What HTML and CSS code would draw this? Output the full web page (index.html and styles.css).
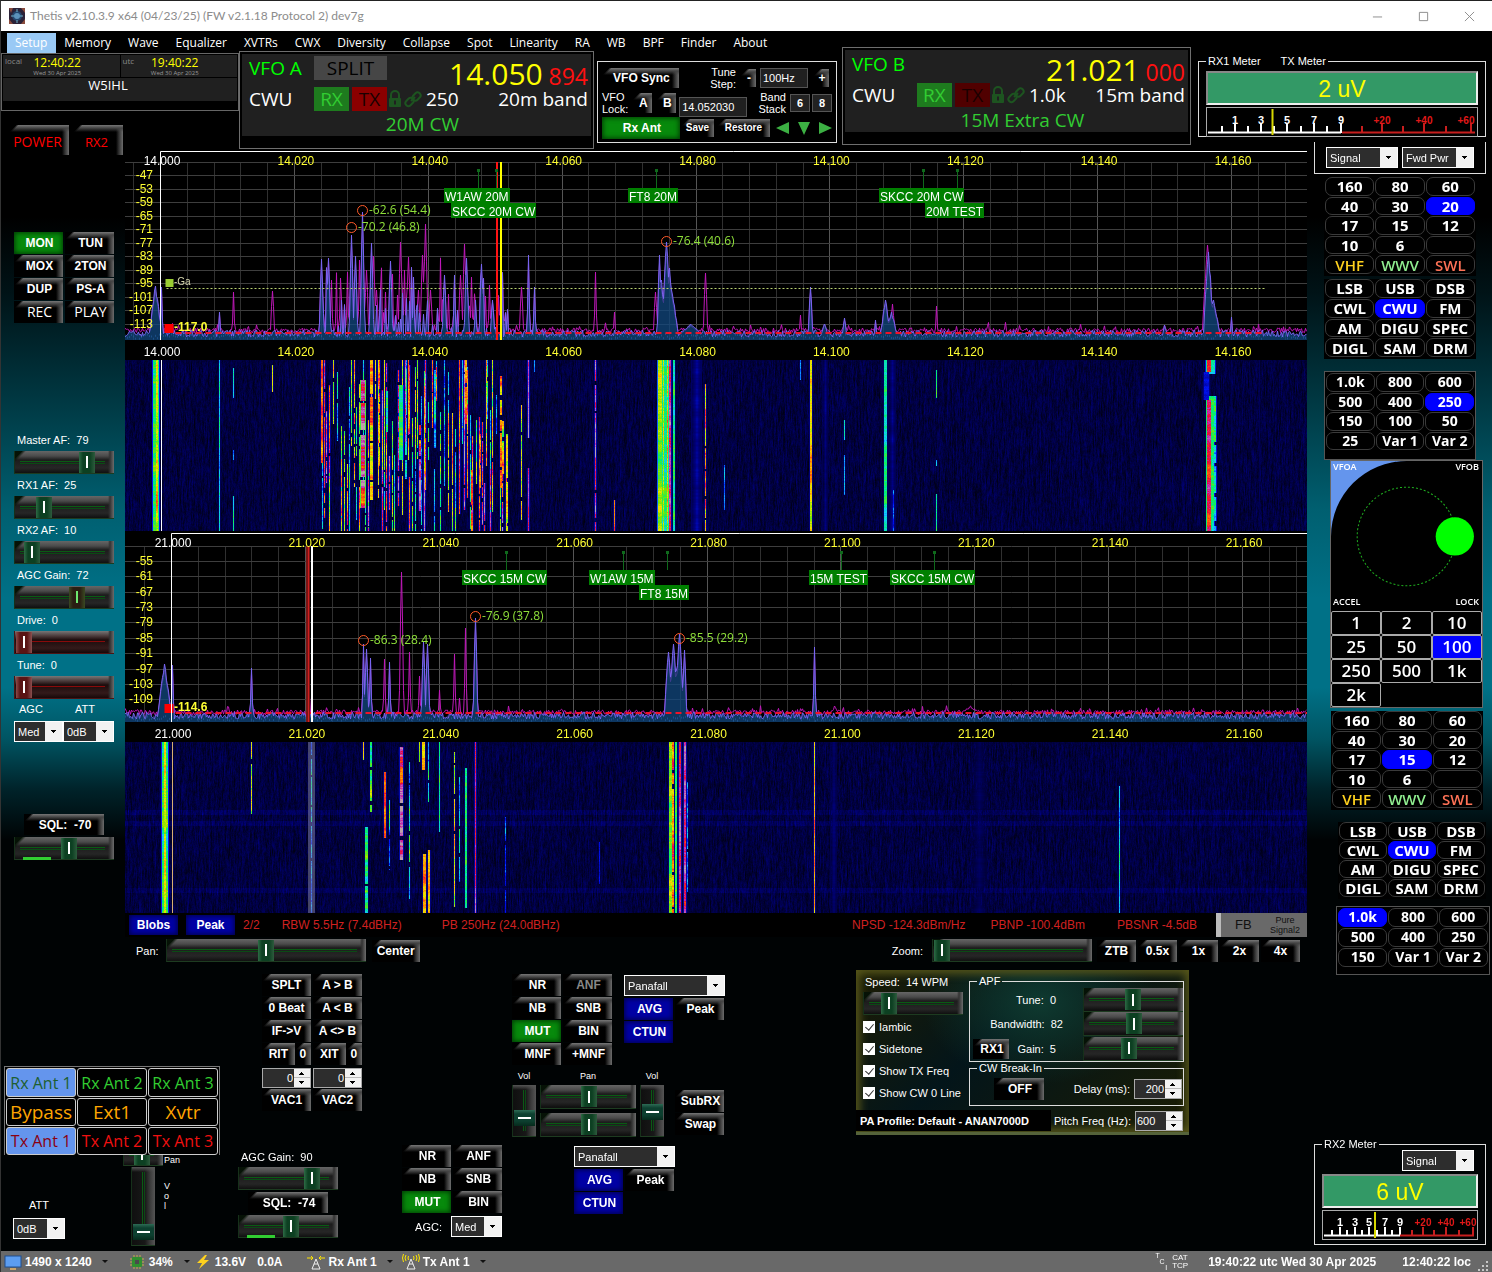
FILE: index.html
```html
<!DOCTYPE html>
<html lang="en">
<head>
<meta charset="UTF-8">
<title>Thetis</title>
<meta content="width=device-width,initial-scale=1.0" name="viewport">
<link rel="stylesheet" href="styles.css">
<script src="display.js" defer></script>
</head>
<body>
<svg width="0" height="0" class="defs">
    <symbol id="lock" viewBox="0 0 14 18">
        <path d="M3 8V5a4 4 0 0 1 8 0v3" fill="none" stroke="currentColor" stroke-width="2"/>
        <rect x="1" y="8" width="12" height="9" rx="1" fill="currentColor"/>
        <path d="M7 10.500v4" stroke="#202020" stroke-width="2"/>
    </symbol>
    <symbol id="chain" viewBox="0 0 18 18">
        <g fill="none" stroke="currentColor" stroke-width="2">
            <rect x="8" y="3.500" width="9" height="6" rx="3" transform="rotate(-45 12.500 6.500)"/>
            <rect x="1" y="9" width="9" height="6" rx="3" transform="rotate(-45 5.500 12)"/>
            <path d="M7 11l4-4"/>
        </g>
    </symbol>
</svg>
<div class="window">
    <header class="titlebar">
        <svg class="app-icon" viewBox="0 0 16 16">
            <rect width="16" height="16" fill="#2b2238"/>
            <path d="M0 0h4l-2 5zM12 0h4v5zM0 11l4 5H0zM16 11v5h-4z" fill="#8a4b3c"/>
            <circle cx="8" cy="8" r="5" fill="#24466c"/>
            <circle cx="8" cy="8" r="3" fill="#5c93bb"/>
            <path d="M8 1v3M8 12v3M2 8h3M11 8h3" stroke="#6fb0c8"/>
        </svg>
        <span class="caption">Thetis v2.10.3.9 x64 (04/23/25) (FW v2.1.18 Protocol 2) dev7g</span>
        <button class="win" aria-label="Minimize"><svg viewBox="0 0 12 12"><path d="M1 6.500h10"/></svg></button>
        <button class="win" aria-label="Maximize"><svg viewBox="0 0 12 12"><path d="M1.500 1.500h9v9h-9z"/></svg></button>
        <button class="win" aria-label="Close"><svg viewBox="0 0 12 12"><path d="M1 1l10 10M11 1L1 11"/></svg></button>
    </header>
    <nav class="menu">
        <a href="#" class="on">Setup</a><a href="#">Memory</a><a href="#">Wave</a><a href="#">Equalizer</a><a href="#">XVTRs</a><a href="#">CWX</a><a href="#">Diversity</a><a href="#">Collapse</a><a href="#">Spot</a><a href="#">Linearity</a><a href="#">RA</a><a href="#">WB</a><a href="#">BPF</a><a href="#">Finder</a><a href="#">About</a>
    </nav>

    <section class="top">
        <div class="clocks">
            <div class="clock"><small>local</small><b>12:40:22</b><i>Wed 30 Apr 2025</i></div>
            <div class="clock"><small>utc</small><b>19:40:22</b><i>Wed 30 Apr 2025</i></div>
            <div class="call">W5IHL</div>
        </div>

        <div class="vfo vfo-a">
            <div class="vfo-in">
                <div class="vrow r1"><span class="vname">VFO A</span><button class="split">SPLIT</button><span class="freq">14.050 <em>894</em></span></div>
                <div class="vrow"><span class="vmode">CWU</span><button class="rx">RX</button><button class="tx">TX</button><svg class="lock"><use href="#lock"/></svg><svg class="chain"><use href="#chain"/></svg><span>250</span><span class="band">20m band</span></div>
                <div class="vseg">20M CW</div>
            </div>
        </div>

        <div class="sync">
            <div class="srow">
                <button class="btn b-sync">VFO Sync</button>
                <label class="two step" for="step">Tune<br>Step:</label>
                <button class="btn b-tiny">-</button>
                <input id="step" class="txt t-step" value="100Hz">
                <button class="btn b-tiny">+</button>
            </div>
            <div class="srow">
                <span class="two">VFO<br>Lock:</span>
                <button class="btn b-ab">A</button>
                <button class="btn b-ab">B</button>
                <input class="txt t-mem" value="14.052030" aria-label="Saved frequency">
                <span class="two stack">Band<br>Stack</span>
                <button class="key">6</button>
                <button class="key">8</button>
            </div>
            <div class="srow last">
                <button class="btn green b-rxant">Rx Ant</button>
                <button class="btn b-save">Save</button>
                <button class="btn b-rest">Restore</button>
                <svg class="arrows" viewBox="0 0 56 14"><path d="M13 1v12L0 7zM22 1h12l-6 13zM43 1v12l13-6z" fill="#3cb043"/></svg>
            </div>
        </div>

        <div class="vfo vfo-b">
            <div class="vfo-in">
                <div class="vrow r1"><span class="vname">VFO B</span><span class="freq">21.021 <em>000</em></span></div>
                <div class="vrow"><span class="vmode">CWU</span><button class="rx">RX</button><button class="tx">TX</button><svg class="lock"><use href="#lock"/></svg><svg class="chain"><use href="#chain"/></svg><span>1.0k</span><span class="band">15m band</span></div>
                <div class="vseg">15M Extra CW</div>
            </div>
        </div>

        <fieldset class="meter">
            <legend><span>RX1 Meter</span><span class="leg2">TX Meter</span></legend>
            <output class="uv">2 uV</output>
            <svg class="scale" viewBox="0 0 272 30">
                <path d="M2 25.500h133M16 25v-6M29 25v-9M42 25v-6M55 25v-9M68 25v-6M81 25v-9M95 25v-6M108 25v-9M121 25v-6M135 26v-10" stroke="#fff" stroke-width="2" fill="none"/>
                <path d="M136 25.500h133M156 25v-6M176 25v-9M197 25v-6M218 25v-9M240 25v-6M265 26v-10" stroke="#c81e1e" stroke-width="2" fill="none"/>
                <g class="nums"><text x="29" y="17">1</text><text x="55" y="17">3</text><text x="81" y="17">5</text><text x="108" y="17">7</text><text x="135" y="17">9</text></g>
                <g class="nums over"><text x="176" y="17">+20</text><text x="218" y="17">+40</text><text x="260" y="17">+60</text></g>
                <path d="M66.500 2v26" stroke="#d8d800" stroke-width="2"/>
            </svg>
        </fieldset>
    </section>

    <div class="body">
    <main class="left">
    <div class="rig">
        <aside class="side">
            <div class="pwr"><button class="btn red b-power">POWER</button><button class="btn red b-rx2">RX2</button></div>
            <div class="grid2 s-keys">
                <button class="btn green">MON</button><button class="btn">TUN</button>
                <button class="btn">MOX</button><button class="btn">2TON</button>
                <button class="btn">DUP</button><button class="btn">PS-A</button>
                <button class="btn big">REC</button><button class="btn big">PLAY</button>
            </div>
            <div class="faders">
                <label for="maf">Master AF:&nbsp; 79</label><input id="maf" type="range" value="77">
                <label for="r1af">RX1 AF:&nbsp; 25</label><input id="r1af" type="range" value="25">
                <label for="r2af">RX2 AF:&nbsp; 10</label><input id="r2af" type="range" value="11">
                <label for="agcg">AGC Gain:&nbsp; 72</label><input id="agcg" type="range" class="agc" value="65">
                <label for="drive">Drive:&nbsp; 0</label><input id="drive" type="range" class="redline" value="1">
                <label for="tune">Tune:&nbsp; 0</label><input id="tune" type="range" class="redline" value="1">
            </div>
            <div class="pair">
                <label class="lab" for="agc1">AGC</label><label class="lab" for="att1">ATT</label>
                <span class="combo"><select id="agc1"><option>Med</option></select></span>
                <span class="combo"><select id="att1"><option>0dB</option></select></span>
            </div>
            <div class="sql">
                <button class="btn">SQL:&nbsp; -70</button>
                <input type="range" value="55" aria-label="Squelch">
                <i class="lvl"></i>
            </div>
        </aside>

        <div class="center">
            <div class="pane" id="pane1">
                <div class="spec"><canvas></canvas></div>
                <div class="strip"></div>
                <div class="fall"><canvas></canvas></div>
            </div>
            <div class="pane" id="pane2">
                <div class="spec"><canvas></canvas></div>
                <div class="strip"></div>
                <div class="fall"><canvas></canvas></div>
            </div>
            <div class="info">
                <button class="btn blue">Blobs</button><button class="btn blue">Peak</button>
                <span>2/2</span><span class="rbw">RBW 5.5Hz (7.4dBHz)</span><span class="pb">PB 250Hz (24.0dBHz)</span>
                <span class="npsd">NPSD -124.3dBm/Hz</span><span class="pbnp">PBNP -100.4dBm</span><span class="snr">PBSNR -4.5dB</span>
                <div class="fb"><b>FB</b><small>Pure<br>Signal2</small></div>
            </div>
            <div class="panrow">
                <label for="pan">Pan:</label><input id="pan" type="range" class="w200" value="50">
                <button class="btn w48">Center</button>
                <label for="zoom" class="zl">Zoom:</label><input id="zoom" type="range" class="w160" value="1">
                <div class="zooms"><button class="btn">ZTB</button><button class="btn">0.5x</button><button class="btn">1x</button><button class="btn">2x</button><button class="btn">4x</button></div>
            </div>
        </div>
    </div>

    <div class="deck">
        <div class="deck-l">
            <div class="ants">
                <button class="rxa on">Rx Ant 1</button><button class="rxa">Rx Ant 2</button><button class="rxa">Rx Ant 3</button>
                <button class="ext">Bypass</button><button class="ext">Ext1</button><button class="ext">Xvtr</button>
                <button class="txa on">Tx Ant 1</button><button class="txa">Tx Ant 2</button><button class="txa">Tx Ant 3</button>
            </div>
            <div class="under">
                <div class="att"><label for="att2">ATT</label><span class="combo"><select id="att2"><option>0dB</option></select></span></div>
                <div class="panstub">
                    <input type="range" class="stub" value="42" aria-label="RX2 pan">
                    <input type="range" class="vert tall" value="8" aria-label="RX2 volume">
                </div>
                <div class="stubtxt"><span>Pan</span><span class="vol">V<br>o<br>l</span></div>
            </div>
        </div>
        <div class="deck-r">
            <div class="upper">
                <div class="vfoops">
                    <button class="btn">SPLT</button><button class="btn">A &gt; B</button>
                    <button class="btn">0 Beat</button><button class="btn">A &lt; B</button>
                    <button class="btn">IF-&gt;V</button><button class="btn">A &lt;&gt; B</button>
                    <div class="rit"><button class="btn">RIT</button><button class="btn">0</button></div>
                    <div class="rit"><button class="btn">XIT</button><button class="btn">0</button></div>
                    <div class="spin"><input value="0" aria-label="RIT offset"><button aria-label="Up"></button><button aria-label="Down"></button></div>
                    <div class="spin"><input value="0" aria-label="XIT offset"><button aria-label="Up"></button><button aria-label="Down"></button></div>
                    <button class="btn">VAC1</button><button class="btn">VAC2</button>
                </div>
                <div class="dsp">
                    <div class="dsp-t">
                        <div class="grid2">
                            <button class="btn">NR</button><button class="btn dim">ANF</button>
                            <button class="btn">NB</button><button class="btn">SNB</button>
                            <button class="btn green">MUT</button><button class="btn">BIN</button>
                            <button class="btn">MNF</button><button class="btn">+MNF</button>
                        </div>
                        <div class="disp">
                            <span class="combo"><select aria-label="RX1 display"><option>Panafall</option></select></span>
                            <div class="grid2"><button class="btn blue">AVG</button><button class="btn">Peak</button><button class="btn blue">CTUN</button></div>
                        </div>
                    </div>
                    <div class="mix">
                        <div class="mcol"><label for="v1">Vol</label><input id="v1" type="range" class="vert" value="30"></div>
                        <div class="mcol pans"><label for="p1">Pan</label><input id="p1" type="range" value="50"><input type="range" value="50" aria-label="Sub RX pan"></div>
                        <div class="mcol"><label for="v2">Vol</label><input id="v2" type="range" class="vert" value="46"></div>
                        <div class="sub"><button class="btn">SubRX</button><button class="btn">Swap</button></div>
                    </div>
                </div>

                <div class="cw">
                    <div class="cw-t">
                        <div class="cw-l">
                            <label for="wpm">Speed:&nbsp; 14 WPM</label>
                            <input id="wpm" type="range" value="21">
                            <label class="chk"><input type="checkbox" checked>Iambic</label>
                            <label class="chk"><input type="checkbox" checked>Sidetone</label>
                            <label class="chk"><input type="checkbox" checked>Show TX Freq</label>
                            <label class="chk"><input type="checkbox" checked>Show CW 0 Line</label>
                        </div>
                        <div class="cw-r">
                            <fieldset class="apf">
                                <legend>APF</legend>
                                <label for="at">Tune:&nbsp; 0</label><input id="at" type="range" value="49">
                                <label for="ab" class="bw">Bandwidth:&nbsp; 82</label><input id="ab" type="range" value="50">
                                <div class="gain"><button class="btn">RX1</button><label for="ag">Gain:&nbsp; 5</label></div><input id="ag" type="range" value="45">
                            </fieldset>
                            <fieldset class="brk">
                                <legend>CW Break-In</legend>
                                <button class="btn">OFF</button>
                                <label for="dly">Delay (ms):</label>
                                <div class="spin"><input id="dly" value="200"><button aria-label="Up"></button><button aria-label="Down"></button></div>
                            </fieldset>
                        </div>
                    </div>
                    <div class="cw-b">
                        <b>PA Profile: Default - ANAN7000D</b>
                        <label for="pitch">Pitch Freq (Hz):</label>
                        <div class="spin l"><input id="pitch" value="600"><button aria-label="Up"></button><button aria-label="Down"></button></div>
                    </div>
                </div>
            </div>

            <div class="lower">
                <div class="rx2g">
                    <label for="g2">AGC Gain:&nbsp; 90</label>
                    <input id="g2" type="range" value="78">
                    <div class="sql"><button class="btn">SQL:&nbsp; -74</button><input type="range" value="53" aria-label="RX2 squelch"><i class="lvl"></i></div>
                </div>
                <div class="rx2d">
                    <div class="grid2">
                        <button class="btn">NR</button><button class="btn">ANF</button>
                        <button class="btn">NB</button><button class="btn">SNB</button>
                        <button class="btn green">MUT</button><button class="btn">BIN</button>
                    </div>
                    <div class="agc2"><label for="agc2">AGC:</label><span class="combo"><select id="agc2"><option>Med</option></select></span></div>
                </div>
                <div class="disp">
                    <span class="combo"><select aria-label="RX2 display"><option>Panafall</option></select></span>
                    <div class="grid2"><button class="btn blue">AVG</button><button class="btn">Peak</button><button class="btn blue">CTUN</button></div>
                </div>
            </div>
        </div>
    </div>
    </main>

    <aside class="right">
        <div class="mbox">
            <span class="combo"><select aria-label="RX meter"><option>Signal</option></select></span>
            <span class="combo"><select aria-label="TX meter"><option>Fwd Pwr</option></select></span>
        </div>
        <div class="pills bands">
            <button>160</button><button>80</button><button>60</button>
            <button>40</button><button>30</button><button class="on">20</button>
            <button>17</button><button>15</button><button>12</button>
            <button>10</button><button>6</button><button aria-label="Blank"></button>
            <button class="vhf">VHF</button><button class="wwv">WWV</button><button class="swl">SWL</button>
        </div>
        <div class="pills modes">
            <button>LSB</button><button>USB</button><button>DSB</button>
            <button>CWL</button><button class="on">CWU</button><button>FM</button>
            <button>AM</button><button>DIGU</button><button>SPEC</button>
            <button>DIGL</button><button>SAM</button><button>DRM</button>
        </div>
        <div class="pills filt">
            <button>1.0k</button><button>800</button><button>600</button>
            <button>500</button><button>400</button><button class="on">250</button>
            <button>150</button><button>100</button><button>50</button>
            <button>25</button><button>Var 1</button><button>Var 2</button>
        </div>
        <div class="knob">
            <svg viewBox="0 0 150 149">
                <path d="M0 0h75A75 75 0 0 0 0 75z" fill="#6495ed"/>
                <circle cx="75" cy="75" r="49" fill="none" stroke="#1fae1f" stroke-dasharray="2 2"/>
                <circle cx="123" cy="75" r="19" fill="#00ff00"/>
                <g class="ktxt"><text x="2" y="9">VFOA</text><text x="147" y="9" text-anchor="end">VFOB</text><text x="2" y="143">ACCEL</text><text x="147" y="143" text-anchor="end">LOCK</text></g>
            </svg>
            <div class="steps">
                <button>1</button><button>2</button><button>10</button>
                <button>25</button><button>50</button><button class="on">100</button>
                <button>250</button><button>500</button><button>1k</button>
                <button>2k</button>
            </div>
        </div>
        <div class="pills bands b2">
            <button>160</button><button>80</button><button>60</button>
            <button>40</button><button>30</button><button>20</button>
            <button>17</button><button class="on">15</button><button>12</button>
            <button>10</button><button>6</button><button aria-label="Blank"></button>
            <button class="vhf">VHF</button><button class="wwv">WWV</button><button class="swl">SWL</button>
        </div>
        <div class="pills modes m2">
            <button>LSB</button><button>USB</button><button>DSB</button>
            <button>CWL</button><button class="on">CWU</button><button>FM</button>
            <button>AM</button><button>DIGU</button><button>SPEC</button>
            <button>DIGL</button><button>SAM</button><button>DRM</button>
        </div>
        <div class="pills filt f2">
            <button class="on">1.0k</button><button>800</button><button>600</button>
            <button>500</button><button>400</button><button>250</button>
            <button>150</button><button>Var 1</button><button>Var 2</button>
        </div>
        <fieldset class="meter m-rx2">
            <legend>RX2 Meter</legend>
            <span class="combo"><select aria-label="RX2 meter type"><option>Signal</option></select></span>
            <output class="uv">6 uV</output>
            <svg class="scale" viewBox="0 0 156 30">
                <path d="M2 25.500h76M10 25v-5M18 25v-8M25 25v-5M33 25v-8M40 25v-5M47 25v-8M55 25v-5M63 25v-8M70 25v-5M78 26v-9" stroke="#fff" stroke-width="2" fill="none"/>
                <path d="M78 25.500h74M90 25v-5M101 25v-8M112 25v-5M124 25v-8M137 25v-5M151 26v-9" stroke="#c81e1e" stroke-width="2" fill="none"/>
                <g class="nums"><text x="18" y="16">1</text><text x="33" y="16">3</text><text x="47" y="16">5</text><text x="63" y="16">7</text><text x="78" y="16">9</text></g>
                <g class="nums over"><text x="101" y="16">+20</text><text x="124" y="16">+40</text><text x="146" y="16">+60</text></g>
                <path d="M53 2v26" stroke="#d8d800" stroke-width="2"/>
            </svg>
        </fieldset>
    </aside>
    </div>

    <footer class="status">
        <svg class="ic" viewBox="0 0 18 16"><rect x="1" y="2" width="16" height="11" fill="#5c9df0" stroke="#1f4f8f"/><path d="M6 15h6" stroke="#caa46a" stroke-width="2"/></svg>
        <span class="s1">1490 x 1240</span><i class="dd"></i>
        <svg class="ic cpu" viewBox="0 0 16 16"><path d="M5 1v14M8 1v14M11 1v14M1 5h14M1 8h14M1 11h14" stroke="#c8b04a"/><rect x="3" y="3" width="10" height="10" rx="1" fill="#2f8f2f"/><rect x="6" y="6" width="4" height="4" fill="#4a4a4a"/></svg>
        <span class="s2">34%</span><i class="dd"></i>
        <svg class="ic" viewBox="0 0 16 16"><path d="M10 1L2 9h5l-3 6 10-9H9l3-5z" fill="#ffd21e"/></svg>
        <span class="s3">13.6V</span><span class="s4">0.0A</span>
        <svg class="ic" viewBox="0 0 18 16"><path d="M9 5L5 15M9 5l4 10M5 15h8M7 10h4" stroke="#eee" fill="none"/><path d="M0 4h6M4 2l2 2-2 2M18 4h-6M14 2l-2 2 2 2" stroke="#ffe600" fill="none"/></svg>
        <span class="s5">Rx Ant 1</span><i class="dd"></i>
        <svg class="ic" viewBox="0 0 18 16"><path d="M9 5L5 15M9 5l4 10M5 15h8M7 10h4" stroke="#eee" fill="none"/><path d="M4 1q-2 3 0 6M1.500 0q-2 4 0 8M14 1q2 3 0 6M16.500 0q2 4 0 8M6.500 2q-1 2 0 4M11.500 2q1 2 0 4" stroke="#ffe600" fill="none"/></svg>
        <span class="s5">Tx Ant 1</span><i class="dd"></i>
        <span class="tci">T<br>&nbsp;&nbsp;C<br>&nbsp;&nbsp;&nbsp;&nbsp;&nbsp;I</span>
        <span class="cat">CAT<br>TCP</span>
        <span class="utc">19:40:22 utc Wed 30 Apr 2025</span>
        <span class="loc">12:40:22 loc</span>
        <svg class="grip" viewBox="0 0 12 12"><path d="M9 1h2v2H9zM9 5h2v2H9zM5 5h2v2H5zM9 9h2v2H9zM5 9h2v2H5zM1 9h2v2H1z" fill="#c8c8c8"/></svg>
    </footer>
</div>
</body>
</html>
```
FILE: styles.css
```css
*{
    margin:0px;
    padding: 0px;
    box-sizing: border-box;
}
body{
    background: #000;
    color: #fff;
    font: 12px/14px "Liberation Sans", Arial, sans-serif;
    white-space: nowrap;
}
button,input,select{
    font: inherit;
    color: inherit;
    border: none;
    border-radius: 0px;
    background: none;
}
fieldset{
    border: 1px solid #ddd;
    min-width: 0px;
}
svg{
    display: block;
}
.defs{
    position: absolute;
}
.window{
    min-height: 100vh;
    display: flex;
    flex-direction: column;
    border-top: 1px solid #222;
    border-left: 1px solid #333;
    background: linear-gradient(#000 0%,#000 17%,#001317 23%,#003640 31%,#005f70 40%,#007187 47%,#007187 54%,#005563 58%,#00232a 62%,#000304 66%,#000304 100%);
}

/* title and menu */
.titlebar{
    height: 30px;
    background: #fff;
    display: flex;
    align-items: center;
    padding-left: 8px;
    color: #8c8c8c;
    font-family: Lato, sans-serif;
}
.app-icon{
    width: 16px;
    height: 16px;
    margin-right: 5px;
}
.caption{
    flex: 1;
}
.win{
    width: 46px;
    height: 30px;
    display: flex;
    justify-content: center;
    align-items: center;
}
.win svg{
    width: 11px;
    height: 11px;
    fill: none;
    stroke: #888;
}
.menu{
    height: 22px;
    display: flex;
    padding: 2px 0px 0px 6px;
    background: #000;
    font: 12px/20px "Open Sans", sans-serif;
}
.menu a{
    color: #fff;
    text-decoration: none;
    padding: 0px 9px 0px 8px;
}
.menu .on{
    background: #99c9f5;
}

/* top strip */
.top{
    height: 98px;
    display: flex;
    align-items: flex-start;
    background: #000;
}
.clocks{
    width: 238px;
    height: 58px;
    border: 1px solid #666;
    padding: 1px;
    display: grid;
    grid-template-columns: 1fr 1fr;
    grid-template-rows: 22px 23px;
    gap: 1px;
    font-family: "Open Sans", sans-serif;
}
.clock{
    background: #202020;
    position: relative;
    text-align: center;
    padding-right: 8px;
}
.clock small{
    position: absolute;
    left: 2px;
    top: 1px;
    font-size: 8px;
    line-height: 9px;
    color: #888;
}
.clock b{
    display: block;
    font-weight: 400;
    font-size: 12px;
    line-height: 16px;
    color: #ffff00;
}
.clock i{
    display: block;
    font-style: normal;
    font-size: 6px;
    line-height: 4px;
    color: #999;
}
.call{
    grid-column: 1 / 3;
    background: #202020;
    text-align: center;
    font-size: 13px;
    line-height: 14px;
    padding-right: 24px;
}
.vfo{
    border: 1px solid #6e6e6e;
    background: #000;
    padding: 2px;
    height: 98px;
    font: 19px/24px "Open Sans", sans-serif;
}
.vfo-a{
    flex: 355 1 0;
    margin-top: -2px;
}
.vfo-b{
    flex: 349 1 0;
    margin: -6px 7px 0px 5px;
}
.vfo-in{
    background: #202020;
    height: 82px;
    padding: 2px 3px 0px 7px;
}
.vrow{
    display: flex;
    align-items: center;
    height: 26px;
}
.r1{
    height: 30px;
    align-items: flex-start;
}
.vname{
    width: 65px;
    color: #00ff00;
}
.vmode{
    width: 65px;
}
.split{
    width: 73px;
    height: 24px;
    background: #464646;
    color: #000;
}
.freq{
    margin-left: auto;
    font-size: 30px;
    line-height: 36px;
    color: #ffff00;
}
.freq em{
    font-style: normal;
    font-size: 23px;
    color: #ff1010;
    margin-left: -2px;
}
.rx,.tx{
    width: 35px;
    height: 24px;
    background: #1e7b1e;
    color: #32cd32;
    margin-right: 3px;
}
.tx{
    background: #8b0000;
    color: #1a0000;
    margin-right: 1px;
}
.vfo-b .tx{
    background: #500000;
}
.lock{
    width: 14px;
    height: 18px;
    color: #1d5420;
    margin-right: 2px;
}
.chain{
    width: 18px;
    height: 18px;
    color: #1d5420;
    margin-right: 4px;
}
.band{
    margin-left: auto;
}
.vseg{
    text-align: center;
    color: #32cd32;
    padding-left: 8px;
}
.sync{
    width: 240px;
    height: 82px;
    margin: 8px 0px 0px 3px;
    border: 1px solid #ddd;
    padding: 3px 2px 2px 4px;
}
.srow{
    display: flex;
    height: 25px;
    align-items: center;
}
.two{
    font-size: 11px;
    line-height: 12px;
}
.step{
    text-align: right;
    width: 61px;
    padding-right: 4px;
}
.stack{
    text-align: right;
    margin-left: auto;
    padding-right: 4px;
}
.txt{
    background: #202020;
    border: 1px solid #555;
    height: 20px;
    padding-left: 2px;
    font-size: 11px;
}
.t-step{
    width: 48px;
    margin: 0px 5px 0px 4px;
}
.t-mem{
    width: 68px;
    margin: 8px 0px 0px 3px;
}

/* bevelled buttons */
.btn{
    height: 22px;
    padding-left: 2px;
    font-weight: 700;
    font-size: 12px;
    line-height: 14px;
    text-align: center;
    background: linear-gradient(135deg,#000 5px,transparent 7px),
        linear-gradient(#777 0px,#444 3px,transparent 7px),
        linear-gradient(to left,#6c6c6c 0px,#333 4px,transparent 7px),
        #000;
}
.green{
    background: #078a0c;
    box-shadow: inset 0px 0px 5px 1px #013a03;
}
.blue{
    background: #0000a4;
    box-shadow: inset 0px 0px 5px 1px #00004a;
}
.red{
    padding: 3px 3px 0px 0px;
    color: #ff0000;
    font: 14px/16px "Open Sans", sans-serif;
}
.dim{
    color: #888;
}
.big{
    font: 14px/16px "Open Sans", sans-serif;
}
.b-sync{
    width: 77px;
    height: 20px;
}
.b-tiny{
    width: 16px;
    height: 18px;
}
.b-ab{
    width: 20px;
    height: 20px;
    margin-left: 4px;
}
.b-rxant{
    width: 78px;
}
.b-save,.b-rest{
    width: 33px;
    height: 18px;
    margin: 0px 2px 0px 1px;
    padding: 0px;
    font-size: 10px;
}
.b-rest{
    width: 53px;
}
.key{
    width: 20px;
    height: 18px;
    margin-right: 2px;
    border: 1px solid #555;
    background: #222;
    font-size: 11px;
    font-weight: 700;
}
.arrows{
    width: 56px;
    height: 14px;
    margin-left: auto;
    margin-right: 2px;
}

/* meters */
.meter{
    width: 288px;
    height: 82px;
    margin: 2px 6px 0px 0px;
    padding: 3px 7px;
    font-size: 11px;
}
.meter legend{
    padding: 0px 2px;
    line-height: 13px;
}
.leg2{
    margin-left: 20px;
}
.uv{
    display: block;
    height: 34px;
    border: 2px solid #ddd;
    border-color: #888 #eee #eee #888;
    background: #339966;
    color: #ffff00;
    font-size: 23px;
    line-height: 32px;
    text-align: center;
}
.scale{
    width: 100%;
    margin-top: 2px;
    background: #000;
    outline: 1px solid #aaa;
    outline-offset: -1px;
}
.nums text{
    font: 700 11px "Liberation Sans", sans-serif;
    text-anchor: middle;
    fill: #fff;
}
.nums.over text{
    fill: #e01818;
    font-size: 10px;
}
.combo{
    display: inline-block;
    position: relative;
    height: 21px;
    border: 1px solid #fff;
    background: #2d2d2d;
    font-size: 11px;
}
.combo select{
    appearance: none;
    width: 100%;
    height: 19px;
    padding-left: 3px;
}
.combo::after{
    content: "";
    position: absolute;
    right: 0px;
    top: 0px;
    width: 17px;
    height: 19px;
    pointer-events: none;
    background: linear-gradient(#000,#000) 6px 8px/5px 1px no-repeat,
        linear-gradient(#000,#000) 7px 9px/3px 1px no-repeat,
        linear-gradient(#000,#000) 8px 10px/1px 1px no-repeat,
        #f2f2f2;
}

/* sliders */
input[type=range]{
    appearance: none;
    display: block;
    width: 100px;
    height: 23px;
    border-bottom: 1px solid #1d3b20;
    border-left: 1px solid #16301a;
    background: linear-gradient(#0a5a14,#0a5a14) 5px 10px/calc(100% - 14px) 1px no-repeat,
        linear-gradient(#0a4a14,#0a4a14) 5px 12px/calc(100% - 14px) 1px no-repeat,
        linear-gradient(135deg,#061206 5px,transparent 8px),
        linear-gradient(to left,#6c6c6c 0px,#333 4px,transparent 6px),
        linear-gradient(#666 0px,#4a4a4a 5px,#1c1c1c 9px,#262626 17px,#101010 22px);
}
input[type=range]::-webkit-slider-thumb{
    appearance: none;
    width: 16px;
    height: 21px;
    background: linear-gradient(#fff,#fff) center/2px 12px no-repeat,
        linear-gradient(to right,#2d6b45,#0d4022 4px,#0d4022 11px,#2d5b3d);
}
input.agc::-webkit-slider-thumb{
    background: linear-gradient(#6ee86e,#6ee86e) center/2px 12px no-repeat,
        linear-gradient(to right,#3a4a22,#2a1e12 4px,#2a1e12 11px,#3a4a22);
}
input.redline{
    background: linear-gradient(#8a0a0a,#8a0a0a) 5px 10px/calc(100% - 14px) 1px no-repeat,
        linear-gradient(to left,#6c6c6c 0px,#333 4px,transparent 6px),
        linear-gradient(#777 0px,#4a3a3a 5px,#1c0c0c 9px,#331a1a 17px,#180808 22px);
    border-color: #4a1414;
}
input.redline::-webkit-slider-thumb{
    background: linear-gradient(#fff,#fff) center/2px 12px no-repeat,
        linear-gradient(to right,#8a4a4a,#5a1414 4px,#5a1414 11px,#8a5050);
}
input.vert{
    writing-mode: vertical-lr;
    direction: rtl;
    width: 24px;
    height: 52px;
    background: linear-gradient(#0a5a14,#0a5a14) 10px 5px/1px calc(100% - 10px) no-repeat,
        linear-gradient(#0a4a14,#0a4a14) 12px 5px/1px calc(100% - 10px) no-repeat,
        linear-gradient(#555 0px,transparent 5px),
        linear-gradient(to left,#555 0px,#3a3a3a 5px,#181818 10px,#101010 22px);
}
input.vert::-webkit-slider-thumb{
    width: 21px;
    height: 16px;
    background: linear-gradient(#fff,#fff) center/13px 2px no-repeat,
        linear-gradient(#2d6b55,#0d4030 4px,#0d4030 11px,#062a1c);
}

.body{
    flex: 1;
    display: flex;
}
.left{
    flex: 1;
    min-width: 0px;
    display: flex;
    flex-direction: column;
}
.rig{
    display: flex;
}
.side{
    width: 124px;
    padding-left: 13px;
    margin-top: -26px;
}
.pwr{
    display: flex;
    gap: 4px;
    margin: 0px 0px 77px -5px;
}
.pwr .btn{
    width: 60px;
    height: 30px;
}
.pwr .b-rx2{
    width: 50px;
    font-size: 13px;
}
.grid2{
    display: grid;
    grid-template-columns: 49px 49px;
    grid-auto-rows: 22px;
    gap: 1px 2px;
}
.s-keys{
    margin-bottom: 106px;
}
.faders label{
    display: block;
    height: 22px;
    line-height: 22px;
    padding-left: 3px;
    font-size: 11px;
}
.pair{
    display: grid;
    grid-template-columns: 49px 51px;
    grid-template-rows: 22px 21px;
    margin-bottom: 72px;
}
.lab{
    padding-left: 5px;
    font-size: 11px;
    line-height: 20px;
}
.lab + .lab{
    padding-left: 12px;
}
.sql{
    width: 100px;
    position: relative;
}
.sql .btn{
    display: block;
    width: 80px;
    height: 21px;
    margin: 0px 0px 2px 10px;
}
.lvl{
    position: absolute;
    left: 9px;
    bottom: 0px;
    width: 28px;
    height: 3px;
    background: #32cd32;
}

/* panadapter and waterfall */
.center{
    flex: 1;
    min-width: 0px;
    background: #000;
}
.pane{
    height: 382px;
}
.spec{
    position: relative;
    height: 189px;
}
.strip{
    position: relative;
    height: 20px;
}
.fall{
    height: 171px;
}
#pane2{
    height: 380px;
}
canvas{
    display: block;
    width: 100%;
    height: 100%;
}
.tick{
    position: absolute;
    transform: translateX(-50%);
    color: #ffff33;
    line-height: 16px;
    top: 2px;
}
.strip .tick{
    top: 4px;
}
.tick.zero{
    color: #fff;
}
.db{
    position: absolute;
    right: calc(100% - 28px);
    color: #ffff33;
    line-height: 14px;
}
.spot{
    position: absolute;
    height: 15px;
    line-height: 18px;
    padding: 0px 1px;
    background: #008000;
}
.peak{
    position: absolute;
    color: #8fe03a;
    font: 12px/14px "Open Sans", sans-serif;
}
.nf{
    position: absolute;
    font-weight: 700;
    color: #ffff33;
}
.ga{
    position: absolute;
    font-size: 10px;
    line-height: 12px;
    color: #d8d8b0;
}
.info{
    display: flex;
    height: 24px;
    align-items: center;
    color: #d02020;
    padding-left: 4px;
}
.info .btn{
    width: 49px;
    height: 20px;
    padding: 0px;
    color: #fff;
    margin-right: 8px;
}
.rbw{
    margin-left: 22px;
}
.pb{
    margin-left: 40px;
}
.npsd{
    margin-left: auto;
}
.pbnp{
    margin-left: 25px;
}
.snr{
    margin: 0px 19px 0px 32px;
}
.fb{
    width: 91px;
    height: 24px;
    background: #696969;
    border-left: 5px solid #bbb;
    color: #111;
    display: flex;
    align-items: center;
    justify-content: space-between;
    padding: 0px 7px 0px 14px;
}
.fb b{
    font-weight: 400;
    font-size: 13px;
}
.fb small{
    font-size: 9px;
    line-height: 10px;
    text-align: center;
}
.panrow{
    display: flex;
    align-items: center;
    height: 27px;
    padding: 0px 7px 0px 11px;
    background: #000304;
    font-size: 11px;
}
.panrow .btn{
    padding: 0px;
}
.panrow .w200{
    width: 200px;
    margin: 0px 6px 0px 7px;
}
.w48{
    width: 48px;
}
.zl{
    margin-left: auto;
}
.panrow .w160{
    width: 160px;
    margin: 0px 5px 0px 9px;
}
.zooms{
    display: flex;
    gap: 2px;
}
.zooms .btn{
    width: 39px;
}

/* lower deck */
.deck{
    flex: 1;
    display: flex;
}
.deck-l{
    width: 237px;
    padding: 102px 0px 0px 3px;
}
.ants{
    position: relative;
    z-index: 1;
    width: 216px;
    height: 89px;
    border: 1px solid #777;
    border-bottom: none;
    padding: 1px 1px 0px;
    display: grid;
    grid-template-columns: repeat(3,1fr);
    grid-template-rows: 29px 28px 28px;
    gap: 1px;
    background: #000;
    font-family: "Open Sans", sans-serif;
    font-size: 16px;
}
.ants button{
    border: 1px solid #ccc;
    border-radius: 3px;
}
.rxa{
    color: #32cd32;
}
.ext{
    color: #ffa500;
    font-size: 19px;
}
.txa{
    color: #f01010;
}
.ants .on{
    background: #6495ed;
    color: #1d5f30;
}
.ants .txa.on{
    color: #8b0010;
}
.under{
    display: flex;
    align-items: flex-start;
    padding-left: 9px;
}
.att{
    width: 52px;
    padding-top: 43px;
    margin-right: 58px;
    text-align: center;
    font-size: 11px;
}
.att label{
    display: block;
}
.att .combo{
    width: 52px;
    margin-top: 6px;
}
.panstub{
    width: 40px;
}
.under .stub{
    width: 40px;
    margin-top: -12px;
}
.under .tall{
    height: 79px;
    margin: 1px 0px 0px 8px;
}
.stubtxt{
    padding-left: 1px;
    font-size: 9px;
    line-height: 10px;
}
.stubtxt span{
    display: block;
}
.stubtxt .vol{
    margin-top: 16px;
}
.deck-r{
    flex: 1;
    min-width: 0px;
}
.upper{
    display: flex;
    align-items: flex-start;
    height: 181px;
    padding: 10px 118px 0px 24px;
}
.vfoops{
    display: grid;
    grid-template-columns: 49px 49px;
    grid-auto-rows: 22px;
    gap: 1px 2px;
}
.vfoops .btn{
    padding-left: 0px;
}
.rit{
    display: flex;
}
.rit .btn{
    flex: 1;
}
.rit .btn:first-child{
    flex: 2;
}
.spin{
    display: grid;
    grid-template-columns: 1fr 16px;
    grid-template-rows: 1fr 1fr;
    height: 20px;
    border: 1px solid #aaa;
    background: #2d2d2d;
    align-self: center;
    font-size: 11px;
}
.vfoops .spin{
    align-self: end;
}
.spin input{
    grid-row: 1 / 3;
    width: 100%;
    min-width: 0px;
    text-align: right;
    padding-right: 1px;
}
.spin.l input{
    text-align: left;
    padding-left: 1px;
}
.spin button{
    border-bottom: 1px solid #bbb;
    background: linear-gradient(#000,#000) 7px 3px/1px 1px no-repeat,
        linear-gradient(#000,#000) 6px 4px/3px 1px no-repeat,
        linear-gradient(#000,#000) 5px 5px/5px 1px no-repeat,
        #f2f2f2;
}
.spin button:last-child{
    border: none;
    background: linear-gradient(#000,#000) 5px 3px/5px 1px no-repeat,
        linear-gradient(#000,#000) 6px 4px/3px 1px no-repeat,
        linear-gradient(#000,#000) 7px 5px/1px 1px no-repeat,
        #f2f2f2;
}
.dsp{
    width: 213px;
    margin-left: 150px;
}
.dsp-t{
    display: flex;
    gap: 12px;
    height: 95px;
}
.disp{
    padding-top: 1px;
}
.disp .combo{
    display: block;
    width: 101px;
    margin-bottom: 2px;
}
.mix{
    display: flex;
    gap: 4px;
}
.mcol label{
    display: block;
    height: 16px;
    line-height: 14px;
    text-align: center;
    font-size: 9px;
}
.pans input{
    width: 96px;
    height: 24px;
    margin-bottom: 4px;
}
.sub{
    padding: 21px 0px 0px 7px;
    display: grid;
    grid-template-columns: 49px;
    grid-auto-rows: 22px;
    gap: 1px;
}
.cw{
    width: 333px;
    height: 165px;
    margin: -4px 0px 0px auto;
    background: radial-gradient(ellipse at 55% 20%,#0f3a30,transparent 45%),linear-gradient(135deg,#1c1c04,#03151a 40%,#1a1c04);
    box-shadow: inset 0px 0px 9px 4px #55551a;
    border-bottom: 3px solid #55633a;
    font-size: 11px;
}
.cw-t{
    display: flex;
    height: 140px;
}
.cw-l{
    width: 113px;
    padding: 5px 0px 0px 7px;
}
.cw-l > label:first-child{
    display: block;
    padding-left: 2px;
    margin-bottom: 3px;
}
.chk{
    display: flex;
    align-items: center;
    height: 22px;
    margin-top: 1px;
    margin-bottom: -1px;
}
.chk input{
    appearance: none;
    width: 12px;
    height: 12px;
    margin-right: 4px;
    background: #fff;
    position: relative;
}
.chk input::after{
    content: "";
    position: absolute;
    left: 4px;
    top: 1px;
    width: 4px;
    height: 7px;
    border: solid #333;
    border-width: 0px 1px 1px 0px;
    transform: rotate(40deg);
}
.cw-r{
    width: 215px;
    padding-top: 5px;
}
.cw legend{
    margin-left: 4px;
    padding: 0px 2px;
    line-height: 13px;
}
.apf{
    display: grid;
    grid-template-columns: 1fr 100px;
    align-items: center;
    height: 87px;
    padding-left: 3px;
}
.apf label{
    text-align: right;
    padding-right: 27px;
}
.apf .bw{
    padding-right: 20px;
}
.apf input[type=range]{
    height: 24px;
}
.gain{
    display: flex;
    align-items: center;
    justify-content: space-between;
}
.gain .btn{
    width: 36px;
    height: 20px;
}
.brk{
    display: flex;
    height: 44px;
    align-items: center;
    padding: 0px 1px 3px 24px;
}
.cw .brk legend{
    margin-left: -17px;
}
.brk .btn{
    width: 50px;
}
.brk label{
    margin-left: auto;
    padding-right: 4px;
}
.brk .spin,.cw-b .spin{
    width: 48px;
}
.cw-b{
    display: flex;
    align-items: center;
    height: 21px;
    padding-right: 6px;
}
.cw-b b{
    flex: 1;
    align-self: stretch;
    background: #000;
    padding-left: 4px;
    line-height: 22px;
}
.cw-b label{
    padding: 0px 4px 0px 3px;
}
.lower{
    display: flex;
    align-items: flex-start;
}
.rx2g{
    width: 100px;
    margin-right: 64px;
    padding-top: 5px;
}
.rx2g label{
    display: block;
    padding-left: 3px;
    height: 17px;
    font-size: 11px;
}
.rx2g .sql{
    padding-top: 2px;
}
.rx2d{
    width: 100px;
    margin-right: 72px;
}
.agc2{
    display: flex;
    align-items: center;
    justify-content: flex-end;
    margin-top: 3px;
    gap: 9px;
    font-size: 11px;
}
.agc2 .combo{
    width: 51px;
}

/* right column */
.right{
    width: 185px;
    display: flex;
    flex-direction: column;
    align-items: flex-start;
    padding-bottom: 6px;
}
.mbox{
    width: 172px;
    height: 32px;
    margin: -9px 0px 3px 7px;
    border: 1px solid #ddd;
    border-top: none;
    background: #000;
    padding: 5px 0px 0px 11px;
    display: flex;
    gap: 4px;
    align-items: flex-start;
}
.mbox .combo{
    width: 72px;
}
.pills{
    width: 152px;
    background: #000;
    padding: 0px 1px 0px 1px;
    margin-left: 17px;
    display: grid;
    grid-template-columns: repeat(3,1fr);
    gap: 1px;
    font: 700 15px/16px "Open Sans", sans-serif;
}
.pills button{
    border: 1px solid #3a3a3a;
    border-radius: 7px;
    white-space: nowrap;
}
.pills .on{
    background: #0000ff;
    border-color: #0000ff;
}
.bands{
    height: 99px;
    padding-bottom: 2px;
    grid-template-rows: repeat(5,1fr);
    margin-bottom: 3px;
}
.modes{
    height: 80px;
    padding-bottom: 2px;
    grid-template-rows: repeat(4,1fr);
    margin-bottom: 12px;
}
.filt{
    height: 89px;
    padding-top: 1px;
    padding-bottom: 9px;
    border: 1px solid #555;
    grid-auto-rows: 1fr;
}
.pills.filt{
    font-size: 14px;
}
.vhf{
    color: #ffd21e;
    font-weight: 600;
}
.wwv{
    color: #90ee90;
    font-weight: 600;
}
.swl{
    color: #ff7256;
    font-weight: 600;
}
.knob{
    width: 153px;
    margin: 0px 0px 3px 23px;
    background: #000;
    border: 1px solid #666;
}
.ktxt text{
    font: 600 9px "Open Sans", sans-serif;
    fill: #fff;
}
.steps{
    display: grid;
    grid-template-columns: repeat(3,1fr);
    grid-auto-rows: 24px;
    font: 600 17px/20px "Open Sans", sans-serif;
}
.steps button{
    border: 1px solid #aaa;
    border-radius: 2px;
}
.steps .on{
    background: #0000ff;
}
.pills.b2{
    margin: 0px 0px 12px 24px;
}
.pills.m2{
    width: 148px;
    height: 77px;
    margin: 0px 0px 7px 31px;
}
.pills.f2{
    width: 154px;
    height: 69px;
    margin-left: 29px;
    padding-bottom: 7px;
}
.m-rx2{
    width: 172px;
    height: 107px;
    margin: auto 0px 0px 7px;
}
.m-rx2 .combo{
    display: block;
    width: 72px;
    margin: -4px 4px 3px auto;
}

/* status bar */
.status{
    height: 21px;
    background: #696969;
    display: flex;
    align-items: center;
    padding: 0px 3px;
    font-weight: 700;
}
.ic{
    width: 18px;
    height: 16px;
    margin-right: 3px;
}
.dd{
    border: 3px solid transparent;
    border-top-color: #111;
    border-bottom: none;
    margin: 0px 14px 0px 10px;
}
.s1 + .dd{
    margin-right: 20px;
}
.s2 + .dd{
    margin: 0px 4px 0px 11px;
}
.s4{
    margin: 0px 25px 0px 11px;
}
.s5 + .dd{
    margin-right: 9px;
}
.tci{
    margin-left: auto;
    font: 7px/6px "Liberation Sans", sans-serif;
}
.cat{
    margin: 0px 20px 0px 5px;
    font: 8px/8px "Liberation Sans", sans-serif;
}
.loc{
    margin: 0px 6px 0px 26px;
}
.grip{
    width: 12px;
    height: 12px;
    align-self: flex-end;
}
```
FILE: display.js
```js
// panadapter + waterfall for both receivers
// x values are console columns, the display starts at column 125 and is 1182 wide
var LEFT=125, SPAN=1182;

var rx1={
    id:"pane1", zero:160, mhz:14, gridTop:11, dbTop:-47, dbFirst:24, dbStep:13.5, dbRows:12,
    // [x, height, width, 0=live trace 1=peak hold]
    sig:[[155,54,5,0],[161,53,1,0],[219,28,1,0],[233,48,1,1],[272,49,2,1],[321,81,2,0],[328,82,2,0],[331,60,1,1],[340,62,1,1],[347,68,1,1],[351,105,2,0],[355,84,2,0],[359,80,1,1],[362,128,2,0],[366,70,2,1],[371,97,2,0],[373,84,2,1],[376,50,2,1],[385,48,1,1],[390,79,2,0],[397,45,1,1],[400,98,2,1],[404,70,1,1],[408,83,2,1],[413,63,1,0],[418,50,1,1],[422,85,2,1],[425,116,2,1],[430,50,2,1],[440,52,1,1],[444,65,2,0],[454,65,1,0],[460,65,2,1],[464,96,2,1],[466,82,2,0],[471,63,1,1],[475,40,1,0],[481,76,2,0],[489,55,1,1],[492,40,2,0],[501,32,5,1],[521,53,2,1],[528,85,1,0],[534,53,1,0],[595,68,1,1],[614,28,1,1],[655,48,2,1],[659,85,2,0],[661,60,4,0],[666,98,3,0],[669,72,5,0],[672,45,5,0],[690,16,14,0],[705,67,2,1],[800,25,1,1],[810,53,2,0],[824,16,3,0],[844,22,2,0],[875,20,1,0],[885,40,4,0],[891,28,5,0],[892,36,2,1],[936,34,1,1],[1164,15,2,0],[1207,95,4,1],[1208,88,4,0],[1213,40,6,0],[1231,23,1,0],[1258,16,1,1]],
    // [x, width, strength, from, to, keyed]
    wf:[[155,6,.64,0,171],[156,2,.75,0,171],[219,1,.57,0,171],[233,1,.6,8,38],[233,1,.5,90,100],[233,1,.6,136,171],[272,1,.72,5,32],[321,2,.85,0,103],[362,4,.98,20,148,1],[371,3,.8,0,140,1],[400,4,.64,25,100],[408,1,.8,0,100,1],[425,1,.93,0,130,1],[464,1,.95,0,150,1],[471,2,.85,110,171,1],[528,1,.97,0,78],[528,1,.93,108,171],[521,1,.75,45,160,1],[534,1,.5,0,12],[595,1,.96,0,171,1],[614,1,.85,140,171],[696,9,.34,0,171],[659,4,.72,0,171],[665,7,.62,0,171],[663,1,.75,0,171],[669,2,.93,0,171],[667,1,.8,0,171,1],[673,2,.62,0,171],[705,1,.82,24,171,1],[724,1,.5,105,150],[800,1,.5,0,20],[810,2,.78,0,171],[824,4,.28,0,171],[844,1,.57,60,80],[844,1,.52,95,135],[885,3,.6,0,171],[891,6,.3,0,171],[893,1,.5,130,171,1],[936,1,.6,10,38],[936,1,.52,100,106],[936,1,.62,134,171],[1210,9,.6,0,14],[1213,4,.6,36,171,1],[1210,7,.62,36,171],[1208,4,.89,0,12],[1208,4,.93,40,171],[1206,5,.42,12,40],[1231,1,.34,0,171],[1259,1,.32,0,171]],
    crowd:[322,508], bands:[],
    spots:[["W1AW 20M",444,0,478],["SKCC 20M CW",451,1,496],["FT8 20M",628,0,656],["SKCC 20M CW",879,0,923],["20M TEST",925,1,957]],
    peaks:[[362,59,"-62.6 (54.4)"],[351,76,"-70.2 (46.8)"],[666,90,"-76.4 (40.6)"]],
    nf:[182,"-117.0"], ga:137,
    cursors:[[496,2,"#ff1414"],[500,2,"#ffff00"]], zeroFall:"#ffffff"
};
var rx2={
    id:"pane2", zero:171, mhz:21, gridTop:13, dbTop:-55, dbFirst:28, dbStep:15.36, dbRows:10,
    sig:[[164,58,6,0],[172,57,1,0],[251,54,1,0],[311,25,1,1],[363,78,1,0],[366,73,2,0],[370,64,1,0],[384,63,1,1],[389,60,1,0],[401,150,2,1],[409,70,1,1],[419,46,1,1],[423,80,2,0],[427,78,2,0],[439,32,1,1],[454,68,1,1],[459,24,1,1],[465,94,1,1],[475,104,2,0],[668,70,3,0],[671,50,5,0],[673,78,3,0],[676,52,5,0],[679,88,3,0],[684,72,2,0],[814,75,1,0],[834,16,5,1],[970,16,16,1]],
    wf:[[164,6,.64,0,171],[164,2,.75,0,171],[251,1,.75,0,72,1],[311,1,.55,0,171,1],[363,1,.8,0,18],[366,3,.6,85,171,1],[370,2,.65,0,70,1],[384,2,.85,30,96],[389,1,.55,58,128,1],[401,3,.95,5,118,1],[409,1,.6,20,158,1],[419,1,.72,0,20],[423,3,.8,0,28],[424,3,.8,112,171],[428,1,.55,0,60,1],[428,2,.8,108,171],[439,1,.6,0,90],[454,1,.75,10,165,1],[459,1,.55,35,140,1],[465,2,.62,26,166],[475,1,.93,0,171],[505,1,.45,75,171,1],[599,1,.4,100,142],[670,3,.7,0,171],[672,2,.85,0,171,1],[675,2,.65,0,171],[679,2,.93,0,171],[684,2,.93,0,171],[687,1,.5,40,150,1],[814,1,.8,0,171],[833,5,.27,0,171],[978,14,.22,0,171],[1119,1,.56,44,171]],
    crowd:null, bands:[70,81,148],
    spots:[["SKCC 15M CW",462,0,506],["W1AW 15M",589,0,623],["FT8 15M",639,1,667],["15M TEST",809,0,841],["SKCC 15M CW",890,0,934]],
    peaks:[[363,107,"-86.3 (28.4)"],[475,83,"-76.9 (37.8)"],[679,105,"-85.5 (29.2)"]],
    nf:[180,"-114.6"], ga:0,
    cursors:[[306,4,"#7a1414"],[308,1,"#d02020"],[311,2,"#ffffff"]], zeroFall:"#d8b070"
};

var seed=7;
function rnd(){
    seed=(seed*16807)%2147483647;
    return seed/2147483647;
}
function pct(x){
    return ((x-LEFT)/SPAN*100)+"%";
}
function add(box,cls,text,left,top){
    var el=document.createElement("span");
    el.className=cls;
    el.textContent=text;
    if(left!==null){
        el.style.left=left;
    }
    if(top!==null){
        el.style.top=top+"px";
    }
    box.appendChild(el);
}

function labels(rx,pane){
    var spec=pane.querySelector(".spec");
    var strip=pane.querySelector(".strip");
    for(var i=0;i<9;i++){
        var x=rx.zero+2+i*133.88;
        var txt=(rx.mhz+i*0.02).toFixed(3);
        add(spec,i?"tick":"tick zero",txt,pct(x),null);
        add(strip,i?"tick":"tick zero",txt,pct(x),null);
    }
    for(i=0;i<rx.dbRows;i++){
        add(spec,"db",rx.dbTop-i*6,null,Math.round(rx.dbFirst+i*rx.dbStep)-7);
    }
    rx.spots.forEach(function(s){
        add(spec,"spot",s[0],pct(s[1]),37+s[2]*15);
    });
    rx.peaks.forEach(function(p){
        add(spec,"peak",p[2],pct(p[0]+7),p[1]-7);
    });
    add(spec,"nf",rx.nf[1],pct(174),rx.nf[0]-13);
    if(rx.ga){
        add(spec,"ga","-Ga",pct(174),125);
    }
}

function spectrum(rx,cv){
    var w=cv.width=cv.clientWidth, h=cv.height=cv.clientHeight;
    var c=cv.getContext("2d"), k=w/SPAN, i, x, y;
    function X(v){ return Math.round((v-LEFT)*k)+0.5; }
    // grid
    c.lineWidth=1;
    for(i=-1;i<44;i++){
        x=X(rx.zero+i*26.776);
        c.strokeStyle=i%5==0?"#555":"#303030";
        c.beginPath();c.moveTo(x,rx.gridTop);c.lineTo(x,h);c.stroke();
    }
    c.strokeStyle="#3e3e3e";
    for(i=-1;i<rx.dbRows;i++){
        y=i<0?rx.gridTop+0.5:Math.round(rx.dbFirst+i*rx.dbStep)+0.5;
        c.beginPath();c.moveTo(0,y);c.lineTo(w,y);c.stroke();
    }
    // traces
    var live=[], hold=[];
    for(i=0;i<w;i++){
        live[i]=3+rnd()*7;
        hold[i]=7+rnd()*5+(rnd()>0.93?rnd()*6:0);
    }
    rx.sig.forEach(function(s){
        var r=s[2]>2?s[2]+1:s[2];
        for(var d=-r;d<=r;d++){
            var n=Math.round((s[0]-LEFT)*k)+d;
            var v=s[1]*(1-Math.pow(Math.abs(d)/(r+0.4),1.3))*(s[2]>3?0.85+rnd()*0.15:1);
            if(d==0){ v=s[1]; }
            if(n<0||n>=w){ continue; }
            if(s[3]==0){ live[n]=Math.max(live[n],v); }
            hold[n]=Math.max(hold[n],s[3]?v:v*0.9);
        }
    });
    if(rx.crowd){
        for(x=rx.crowd[0];x<rx.crowd[1];x+=1+Math.floor(rnd()*3)){
            i=Math.round((x-LEFT)*k);
            y=10+rnd()*rnd()*85;
            if(rnd()>0.5){ live[i]=Math.max(live[i],y); }
            hold[i]=Math.max(hold[i],y);
        }
    }
    function path(a){
        c.beginPath();
        c.moveTo(0,h-a[0]);
        for(var j=1;j<w;j++){ c.lineTo(j+0.5,h-a[j]); }
    }
    path(hold);
    c.strokeStyle="#c018ba";
    c.stroke();
    path(live);
    c.lineTo(w,h);c.lineTo(0,h);c.closePath();
    c.fillStyle="rgba(18,72,128,.75)";
    c.fill();
    path(live);
    c.strokeStyle="#7a66f4";
    c.stroke();
    c.fillStyle="rgba(40,100,170,.55)";
    for(i=0;i<w;i+=2){ c.fillRect(i,h-2-rnd()*5,1,2); }
    // noise floor and gain lines
    c.strokeStyle="#f01428";
    c.lineWidth=2;
    c.setLineDash([6,4]);
    c.beginPath();c.moveTo(X(175),rx.nf[0]);c.lineTo(rx.ga?X(1265):w,rx.nf[0]);c.stroke();
    c.lineWidth=1;
    if(rx.ga){
        c.strokeStyle="#b8d070";
        c.setLineDash([2,2]);
        c.beginPath();c.moveTo(X(166),137.5);c.lineTo(X(1265),137.5);c.stroke();
        c.fillStyle="#9acd32";
        c.fillRect(X(165),128,8,8);
    }
    c.setLineDash([]);
    c.fillStyle="#ff0000";
    c.fillRect(X(164),rx.nf[0]-9,9,9);
    // band edge
    c.strokeStyle="#fff";
    c.beginPath();c.moveTo(X(rx.zero),h);c.lineTo(X(rx.zero),0.5);c.lineTo(w,0.5);c.stroke();
    rx.cursors.forEach(function(q){
        c.fillStyle=q[2];
        c.fillRect(Math.floor(X(q[0])),rx.gridTop,q[1],h-rx.gridTop);
    });
    rx.spots.forEach(function(s){
        c.strokeStyle=c.fillStyle="#0f6a1c";
        c.beginPath();c.moveTo(X(s[3]),19);c.lineTo(X(s[3]),37);c.stroke();
        c.fillRect(X(s[3])-1.5,18,3,3);
    });
    c.strokeStyle="#ff5a28";
    rx.peaks.forEach(function(p){
        c.beginPath();c.arc(X(p[0]),p[1]+0.5,5,0,7);c.stroke();
    });
}

var map=[[0,0,0,0],[.1,0,0,40],[.3,0,0,130],[.45,0,20,255],[.55,20,200,255],[.63,0,240,110],[.7,130,230,0],[.76,240,230,0],[.84,255,110,0],[.9,235,10,50],[.95,190,50,190],[1,190,160,170]];
function color(v){
    v=Math.max(0,Math.min(1,v));
    for(var i=1;i<map.length;i++){
        if(v<=map[i][0]){
            var a=map[i-1], b=map[i], t=(v-a[0])/(b[0]-a[0]);
            return [a[1]+(b[1]-a[1])*t,a[2]+(b[2]-a[2])*t,a[3]+(b[3]-a[3])*t];
        }
    }
    return [255,255,255];
}

function waterfall(rx,cv){
    var w=cv.width=cv.clientWidth, h=cv.height=cv.clientHeight;
    var c=cv.getContext("2d"), k=w/SPAN, x, y, n;
    var lv=new Float32Array(w*h);
    for(x=0;x<w;x++){
        n=0;
        for(y=0;y<h;y++){
            n=n*0.82+(rnd()-0.5)*0.07;
            lv[y*w+x]=0.15+n;
        }
    }
    rx.bands.forEach(function(b){
        for(y=b-2;y<=b+2;y++){
            for(x=0;x<w;x++){ lv[y*w+x]+=0.06; }
        }
    });
    function streak(s){
        var x0=Math.round((s[0]-(s[1]-1)/2-LEFT)*k), soft=s[2]<0.4;
        var on=true, left=s[5]?10+rnd()*20:0, drift=0;
        for(var yy=s[3];yy<Math.min(s[4],h);yy++){
            if(s[5]&&--left<0){
                on=!on||rnd()>0.5;
                left=on?8+rnd()*24:1+rnd()*4;
            }
            if(!on){ continue; }
            drift=drift*0.88+(rnd()-0.5)*(s[5]?0.09:0.05);
            for(var d=-1;d<=s[1];d++){
                var i=yy*w+x0+d;
                if(x0+d<0||x0+d>=w){ continue; }
                var edge=d<0||d>=s[1];
                var v=soft?s[2]*(1-Math.abs(d-s[1]/2)/s[1]*0.8)+drift*0.6:s[2]+drift+(rnd()-0.5)*0.04;
                if(edge){ v=s[1]>3?s[2]*0.68:s[2]*0.36; }
                if(edge||soft){ lv[i]=Math.max(lv[i],v); }
                else{ lv[i]=v; }
            }
        }
    }
    if(rx.crowd){
        for(x=rx.crowd[0];x<rx.crowd[1];x+=2+Math.floor(rnd()*3)){
            var tries=1+Math.floor(rnd()*2.5);
            while(tries--){
                var from=Math.floor(rnd()*130*(x%3?1:0));
                streak([x,rnd()>0.9?2:1,0.5+rnd()*0.48,from,from+30+Math.floor(rnd()*130),1]);
            }
        }
    }
    rx.wf.forEach(streak);
    var img=c.createImageData(w,h);
    for(n=0;n<w*h;n++){
        var p=color(lv[n]);
        img.data[n*4]=p[0];
        img.data[n*4+1]=p[1];
        img.data[n*4+2]=p[2];
        img.data[n*4+3]=255;
    }
    c.putImageData(img,0,0);
    c.fillStyle=rx.zeroFall;
    c.fillRect(Math.round((rx.zero+1-LEFT)*k),0,1,h);
    if(!rx.crowd){
        c.fillStyle="rgba(150,150,170,.45)";
        c.fillRect(Math.round((308-LEFT)*k),0,7,h);
    }
}

function draw(){
    seed=7;
    [rx1,rx2].forEach(function(rx){
        var pane=document.getElementById(rx.id);
        spectrum(rx,pane.querySelector(".spec canvas"));
        waterfall(rx,pane.querySelector(".fall canvas"));
    });
}
labels(rx1,document.getElementById("pane1"));
labels(rx2,document.getElementById("pane2"));
draw();
window.addEventListener("resize",draw);
```
